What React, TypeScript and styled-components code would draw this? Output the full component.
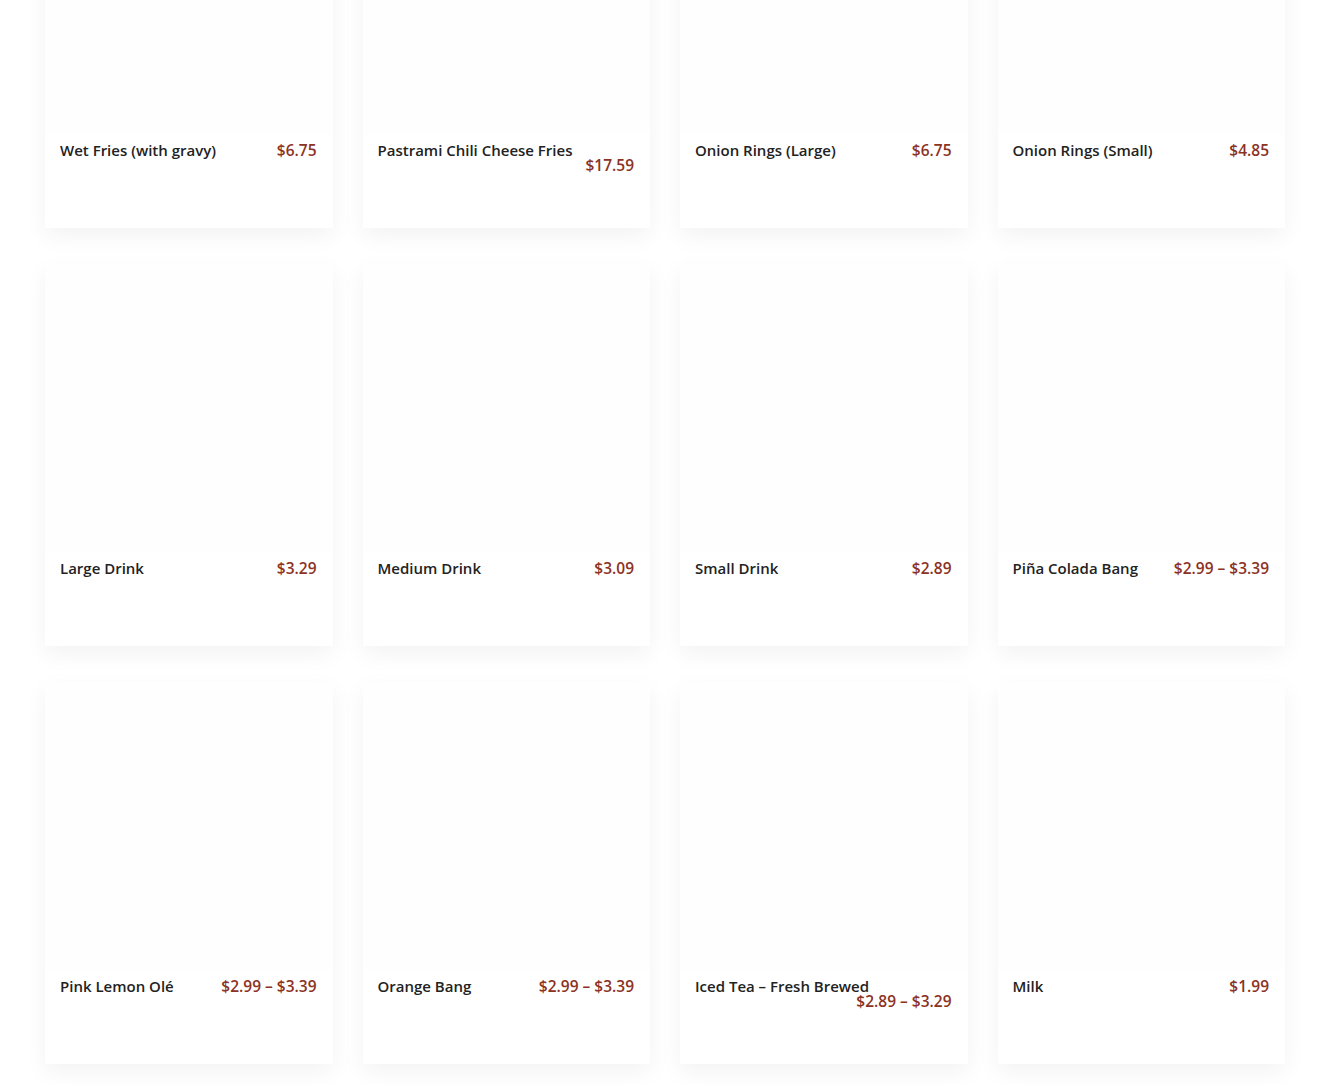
import * as React from 'react'
import styled, { createGlobalStyle } from 'styled-components'

const Global = createGlobalStyle`
  html, body {
    margin: 0;
    padding: 0;
    background: #ffffff;
    overflow: hidden;
  }
  body {
    font-family: "Open Sans", "Noto Sans", Arial, sans-serif;
  }
`

const Page = styled.div`
  height: 1084px;
  overflow: hidden;
  padding: 0 45px;
`

const Grid = styled.ul`
  display: grid;
  grid-template-columns: repeat(4, 1fr);
  column-gap: 30px;
  row-gap: 36px;
  list-style: none;
  margin: -154px 0 0;
  padding: 0;
`

const Card = styled.li`
  background: #ffffff;
  box-shadow: 0 8px 22px rgba(0, 0, 0, 0.05);
  display: flex;
  flex-direction: column;
  height: 382px;
`

const Thumb = styled.div`
  background: #fefefe;
  height: 288px;
`

const Body = styled.div`
  display: flex;
  flex-wrap: wrap;
  align-items: baseline;
  justify-content: space-between;
  column-gap: 14px;
  padding: 8px 16px 0 15px;
`

const Title = styled.h3`
  color: #222222;
  font-size: 15px;
  font-weight: 600;
  line-height: 16px;
  margin: 0;
`

const Price = styled.span`
  color: #8c3224;
  font-size: 15.5px;
  font-weight: 600;
  line-height: 15px;
  margin-left: auto;
`

const items: [string, string][] = [
  ['Wet Fries (with gravy)', '$6.75'],
  ['Pastrami Chili Cheese Fries', '$17.59'],
  ['Onion Rings (Large)', '$6.75'],
  ['Onion Rings (Small)', '$4.85'],
  ['Large Drink', '$3.29'],
  ['Medium Drink', '$3.09'],
  ['Small Drink', '$2.89'],
  ['Piña Colada Bang', '$2.99 – $3.39'],
  ['Pink Lemon Olé', '$2.99 – $3.39'],
  ['Orange Bang', '$2.99 – $3.39'],
  ['Iced Tea – Fresh Brewed', '$2.89 – $3.29'],
  ['Milk', '$1.99'],
]

export default () => (
  <Page>
    <Global />
    <Grid>
      {items.map(([name, price]) => (
        <Card key={name}>
          <Thumb />
          <Body>
            <Title>{name}</Title>
            <Price>{price}</Price>
          </Body>
        </Card>
      ))}
    </Grid>
  </Page>
)
